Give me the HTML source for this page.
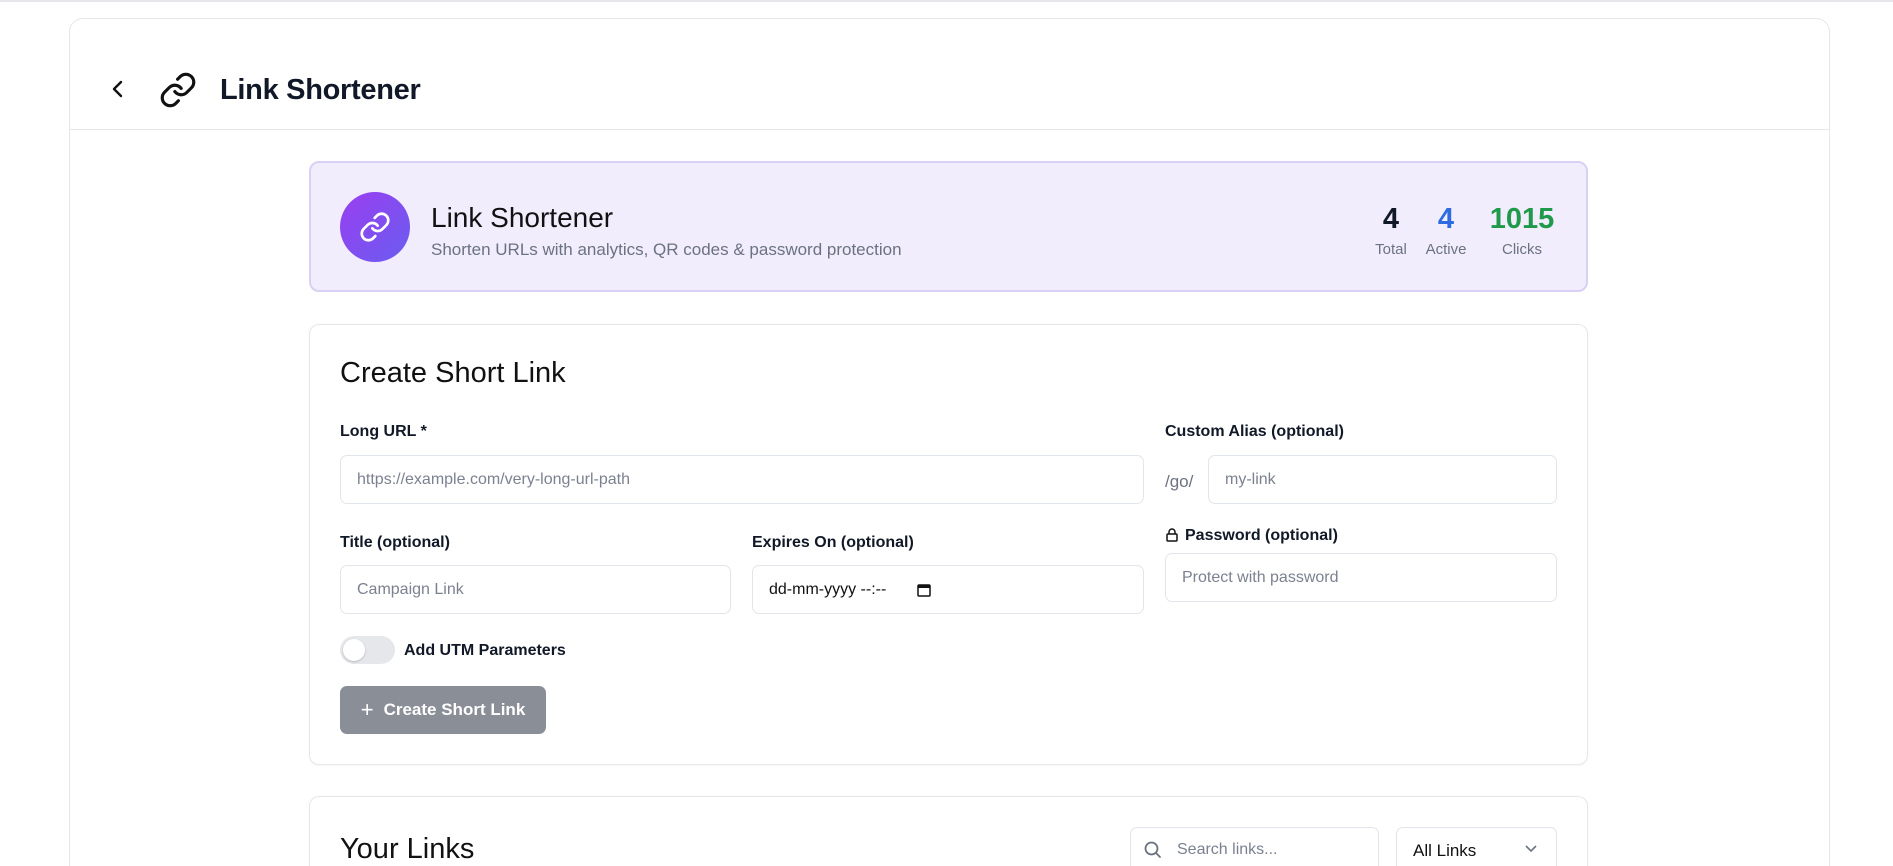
<!DOCTYPE html>
<html><head><meta charset="utf-8"><style>
*{box-sizing:border-box;margin:0;padding:0}
html,body{width:1893px;height:866px;overflow:hidden}
body{background:#fff;font-family:"Liberation Sans",sans-serif;color:#111827;position:relative}
#wrap{position:absolute;left:0;top:0;width:1893px;height:866px;overflow:hidden}
.abs{position:absolute}
.topline{left:0;top:0;width:1893px;height:2px;background:#e5e7eb}
.outer{left:69px;top:18px;width:1761px;height:848px;border:1px solid #e5e7eb;border-bottom:none;border-radius:14px 14px 0 0}
.hdiv{left:69px;top:129px;width:1761px;height:1px;background:#e5e7eb}
.card{border:1px solid #e5e7eb;border-radius:10px;background:#fff;box-shadow:0 1px 2px rgba(0,0,0,.04)}
.lbl{font-size:16px;font-weight:bold;color:#111827}
.inp{border:1px solid #e2e5ea;border-radius:7px;height:49px;font-size:16px;color:#7b8190;padding-left:16px;display:flex;align-items:center;background:#fff}
.muted{color:#6b7280}
</style></head><body><div id="wrap">
<div class="abs topline"></div>
<div class="abs outer"></div>
<div class="abs hdiv"></div>
<svg class="abs" style="left:110px;top:79px" width="16" height="20" viewBox="0 0 16 20"><path d="M11 3 L4 10 L11 17" fill="none" stroke="#111" stroke-width="2.4" stroke-linecap="round" stroke-linejoin="round"/></svg>
<svg class="abs" style="left:159px;top:71px" width="38" height="38" viewBox="0 0 24 24" fill="none" stroke="#111" stroke-width="2" stroke-linecap="round" stroke-linejoin="round"><path d="M10 13a5 5 0 0 0 7.54.54l3-3a5 5 0 0 0-7.07-7.07l-1.72 1.71"/><path d="M14 11a5 5 0 0 0-7.54-.54l-3 3a5 5 0 0 0 7.07 7.07l1.71-1.71"/></svg>
<div class="abs" style="left:220px;top:74px;font-size:29px;font-weight:bold;letter-spacing:-0.3px">Link Shortener</div>

<div class="abs" style="left:309px;top:161px;width:1279px;height:131px;background:#f1edfc;border:2px solid #d9d0f6;border-radius:10px"></div>
<div class="abs" style="left:340px;top:192px;width:70px;height:70px;border-radius:50%;background:linear-gradient(135deg,#9a3ff0,#6a5cf0)"></div>
<svg class="abs" style="left:359px;top:211px" width="32" height="32" viewBox="0 0 24 24" fill="none" stroke="#fff" stroke-width="2" stroke-linecap="round" stroke-linejoin="round"><path d="M10 13a5 5 0 0 0 7.54.54l3-3a5 5 0 0 0-7.07-7.07l-1.72 1.71"/><path d="M14 11a5 5 0 0 0-7.54-.54l-3 3a5 5 0 0 0 7.07 7.07l1.71-1.71"/></svg>
<div class="abs" style="left:431px;top:202px;font-size:28px;color:#111">Link Shortener</div>
<div class="abs muted" style="left:431px;top:240px;font-size:17px">Shorten URLs with analytics, QR codes &amp; password protection</div>
<div class="abs" style="left:1366px;top:203px;width:50px;text-align:center;font-size:29px;font-weight:bold;color:#111827">4</div>
<div class="abs muted" style="left:1366px;top:241px;width:50px;text-align:center;font-size:15px">Total</div>
<div class="abs" style="left:1421px;top:203px;width:50px;text-align:center;font-size:29px;font-weight:bold;color:#2f6be0">4</div>
<div class="abs muted" style="left:1421px;top:241px;width:50px;text-align:center;font-size:15px">Active</div>
<div class="abs" style="left:1482px;top:203px;width:80px;text-align:center;font-size:29px;font-weight:bold;color:#1e9a4a">1015</div>
<div class="abs muted" style="left:1482px;top:241px;width:80px;text-align:center;font-size:15px">Clicks</div>

<div class="abs card" style="left:309px;top:324px;width:1279px;height:441px"></div>
<div class="abs" style="left:340px;top:357px;font-size:29px;color:#111">Create Short Link</div>
<div class="abs lbl" style="left:340px;top:423px">Long URL *</div>
<div class="abs inp" style="left:340px;top:455px;width:804px">https://example.com/very-long-url-path</div>
<div class="abs lbl" style="left:1165px;top:423px">Custom Alias (optional)</div>
<div class="abs muted" style="left:1165px;top:472px;font-size:17px">/go/</div>
<div class="abs inp" style="left:1208px;top:455px;width:349px">my-link</div>
<div class="abs lbl" style="left:340px;top:534px">Title (optional)</div>
<div class="abs inp" style="left:340px;top:565px;width:391px">Campaign Link</div>
<div class="abs lbl" style="left:752px;top:534px">Expires On (optional)</div>
<div class="abs inp" style="left:752px;top:565px;width:392px;color:#111">dd-mm-yyyy --:--
<svg style="margin-left:30px" width="16" height="16" viewBox="0 0 16 16"><rect x="2" y="3" width="12" height="11" rx="1" fill="none" stroke="#111" stroke-width="1.5"/><rect x="2" y="3" width="12" height="3" fill="#111"/></svg></div>
<svg class="abs" style="left:1165px;top:527px" width="14" height="16" viewBox="0 0 14 16"><rect x="2" y="7" width="10" height="7" rx="1" fill="none" stroke="#111" stroke-width="1.5"/><path d="M4 7V5a3 3 0 0 1 6 0v2" fill="none" stroke="#111" stroke-width="1.5"/></svg>
<div class="abs lbl" style="left:1185px;top:527px">Password (optional)</div>
<div class="abs inp" style="left:1165px;top:553px;width:392px">Protect with password</div>
<div class="abs" style="left:340px;top:636px;width:55px;height:28px;border-radius:14px;background:#e5e7eb"></div>
<div class="abs" style="left:343px;top:639px;width:22px;height:22px;border-radius:50%;background:#fff;box-shadow:0 1px 2px rgba(0,0,0,.2)"></div>
<div class="abs lbl" style="left:404px;top:642px">Add UTM Parameters</div>
<div class="abs" style="left:340px;top:686px;width:206px;height:48px;border-radius:7px;background:#898e97;color:#fff;font-size:17px;font-weight:bold;display:flex;align-items:center;justify-content:center;gap:10px"><span style="font-size:22px;font-weight:normal">+</span>Create Short Link</div>

<div class="abs card" style="left:309px;top:796px;width:1279px;height:70px;border-bottom:none;border-radius:10px 10px 0 0"></div>
<div class="abs" style="left:340px;top:833px;font-size:29px;line-height:33px;color:#111">Your Links</div>
<div class="abs inp" style="left:1130px;top:827px;width:249px;height:39px;border-bottom:none;border-radius:7px 7px 0 0;padding-left:46px;align-items:flex-start;padding-top:13px">Search links...</div>
<svg class="abs" style="left:1143px;top:840px" width="20" height="20" viewBox="0 0 20 20"><circle cx="8.5" cy="8.5" r="6" fill="none" stroke="#6b7280" stroke-width="1.8"/><path d="M13 13l4 4" stroke="#6b7280" stroke-width="1.8" stroke-linecap="round"/></svg>
<div class="abs inp" style="left:1396px;top:827px;width:161px;height:39px;border-bottom:none;border-radius:7px 7px 0 0;color:#111;font-size:17px;align-items:flex-start;padding-top:13px">All Links</div>
<svg class="abs" style="left:1524px;top:844px" width="14" height="10" viewBox="0 0 14 10"><path d="M2 2l5 5 5-5" fill="none" stroke="#6b7280" stroke-width="1.6"/></svg>
</div></body></html>
